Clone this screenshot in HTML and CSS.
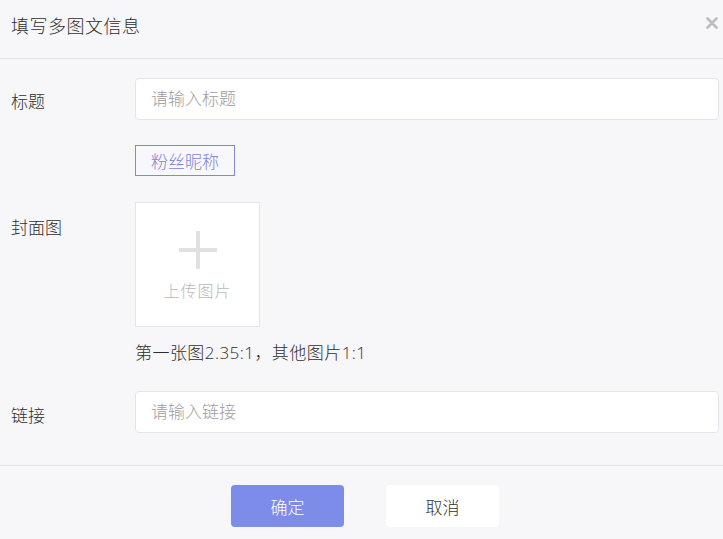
FILE: index.html
```html
<!DOCTYPE html>
<html lang="zh-CN">
<head>
<meta charset="utf-8">
<title>填写多图文信息</title>
<link rel="stylesheet" href="styles.css">
</head>
<body>
<div class="dialog">
  <div class="header">
    <div class="title">填写多图文信息</div>
    <svg class="close" width="12" height="12" viewBox="0 0 12 12"><path d="M1.5 1.5L10.5 10.5M10.5 1.5L1.5 10.5" stroke="#bdbdbd" stroke-width="2.6" stroke-linecap="round"/></svg>
  </div>
  <div class="body">
    <div class="row row-title">
      <div class="label">标题</div>
      <div class="field"><input class="input" placeholder="请输入标题"></div>
    </div>
    <div class="row row-tag">
      <div class="label"></div>
      <div class="field"><span class="tag">粉丝昵称</span></div>
    </div>
    <div class="row row-cover">
      <div class="label">封面图</div>
      <div class="field">
        <div class="upload">
          <svg class="plus" width="38" height="38" viewBox="0 0 38 38"><path d="M19 0V38M0 19H38" stroke="#e1e1e3" stroke-width="4"/></svg>
          <div class="upload-text">上传图片</div>
        </div>
        <div class="hint">第一张图2.35:1，其他图片1:1</div>
      </div>
    </div>
    <div class="row row-link">
      <div class="label">链接</div>
      <div class="field"><input class="input" placeholder="请输入链接"></div>
    </div>
  </div>
  <div class="footer">
    <button class="btn btn-primary">确定</button>
    <button class="btn btn-default">取消</button>
  </div>
</div>
</body>
</html>
```
FILE: styles.css
```css
* { box-sizing: border-box; }
html, body { margin: 0; padding: 0; }
body {
  background: #f7f6f8;
  font-family: "Open Sans", "Noto Sans CJK SC", "Noto Sans", sans-serif;
  font-weight: 300;
  color: #333;
}
.dialog { width: 723px; height: 539px; display: flex; flex-direction: column; }
.header {
  height: 59px;
  border-bottom: 1px solid #e4e3e6;
  display: flex;
  align-items: center;
  justify-content: space-between;
  padding: 0 5px 6px 11px;
}
.title { font-size: 18px; line-height: 24px; color: #2e2e2e; letter-spacing: 0.5px; }
.close { margin-top: -6px; }
.body { padding: 19px 4px 0 11px; }
.row { display: grid; grid-template-columns: 124px 1fr; align-items: start; }
.label { font-size: 17px; line-height: 20px; color: #2e2e2e; }
.row-title .label { padding-top: 14px; }
.row-tag { margin-top: 25px; }
.row-cover { margin-top: 26px; }
.row-cover .label { padding-top: 16px; }
.row-link { margin-top: 28px; }
.row-link .label { padding-top: 15px; }
.input {
  width: 100%;
  height: 42px;
  border: 1px solid #e5e4e8;
  border-radius: 4px;
  background: #fff;
  padding: 0 15px 2px;
  font-family: inherit;
  font-weight: 300;
  font-size: 17px;
  color: #333;
  outline: none;
}
.input::placeholder { color: #9c9c9e; }
.tag {
  display: inline-flex;
  align-items: center;
  justify-content: center;
  width: 100px;
  height: 31px;
  border: 1px solid #8089d8;
  color: #7b84d4;
  font-size: 17px;
  background: #f8f7fb;
}
.upload {
  width: 125px;
  height: 125px;
  background: #fff;
  border: 1px solid #e6e5e9;
  display: flex;
  flex-direction: column;
  align-items: center;
  padding-top: 28px;
}
.upload-text { margin-top: 12px; font-size: 16px; line-height: 20px; color: #b8b8b8; letter-spacing: 1px; }
.hint { margin-top: 16px; font-size: 17px; line-height: 20px; color: #2e2e2e; letter-spacing: 0.45px; }
.footer {
  margin-top: 32px;
  border-top: 1px solid #e4e3e6;
  display: flex;
  justify-content: center;
  gap: 42px;
  padding: 19px 0 0 7px;
}
.btn {
  width: 113px;
  height: 42px;
  border: none;
  border-radius: 4px;
  font-family: inherit;
  font-weight: 300;
  font-size: 17px;
}
.btn-primary { background: #7d8ce9; color: #fff; }
.btn-default { background: #fff; color: #333; }
```
